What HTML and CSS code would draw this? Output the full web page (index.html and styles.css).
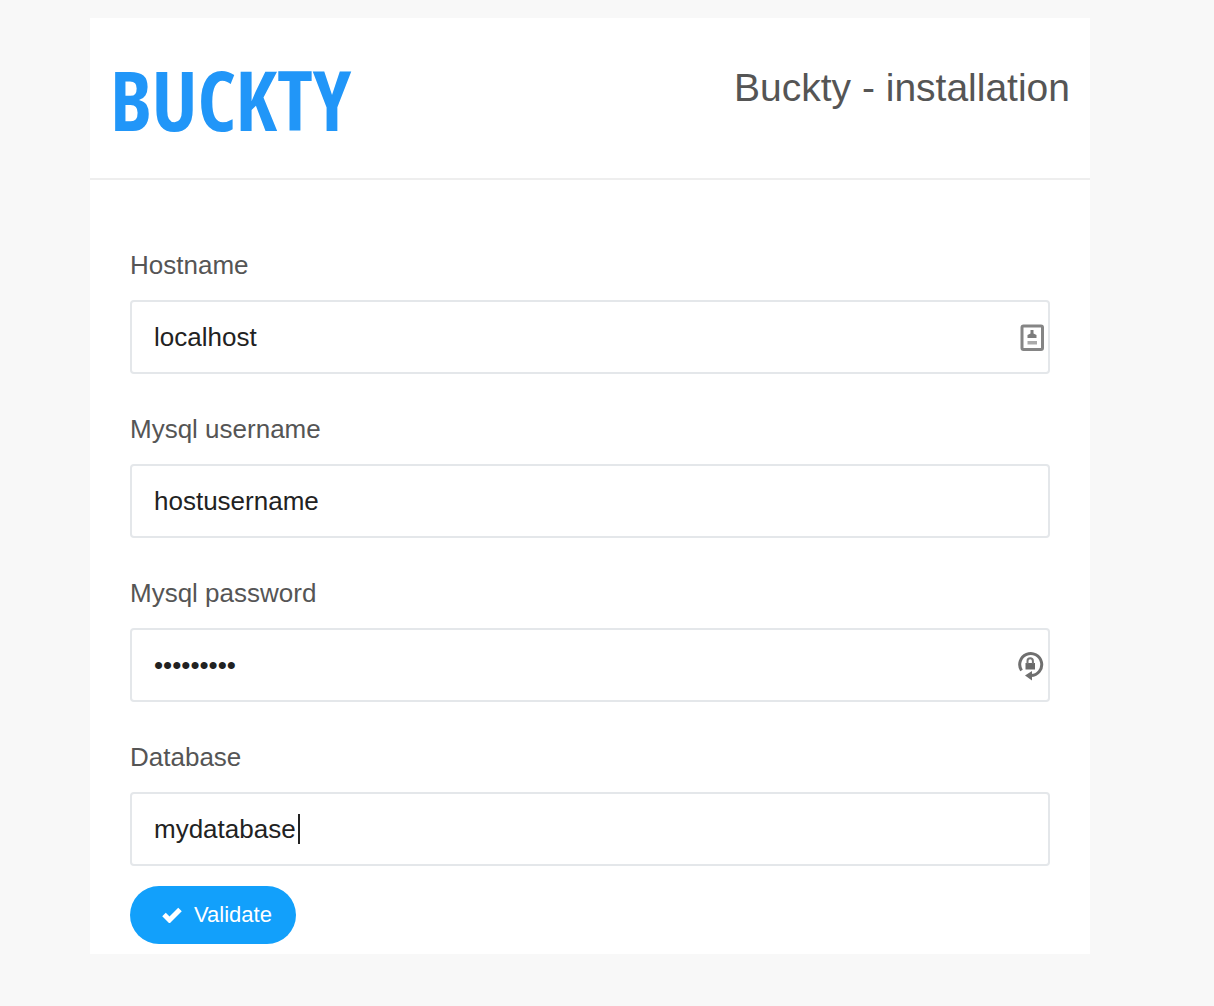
FILE: index.html
```html
<!DOCTYPE html>
<html lang="en">
<head>
<meta charset="utf-8">
<meta name="viewport" content="width=device-width, initial-scale=1">
<title>Buckty - installation</title>
<link rel="stylesheet" href="styles.css">
</head>
<body>
<main class="card">
  <header class="card-header">
    <div class="logo">BUCKTY</div>
    <h1 class="title">Buckty - installation</h1>
  </header>
  <form class="form">
    <div class="field">
      <label for="hostname">Hostname</label>
      <div class="control">
        <input id="hostname" type="text" value="localhost">
        <svg class="field-icon" viewBox="0 0 28 32" aria-hidden="true">
          <rect x="4" y="5" width="20.500" height="23.500" rx="1.500" fill="none" stroke="#858585" stroke-width="3"/>
          <path d="M12.500 9h3v3.500l3 1.500v3h-9v-3l3-1.500z" fill="#7c7c7c"/>
          <path d="M9.500 20h9.500v3.500H9.500z" fill="#aaa"/>
        </svg>
      </div>
    </div>
    <div class="field">
      <label for="username">Mysql username</label>
      <div class="control"><input id="username" type="text" value="hostusername"></div>
    </div>
    <div class="field">
      <label for="password">Mysql password</label>
      <div class="control">
        <input id="password" type="password" value="password1">
        <svg class="field-icon" viewBox="0 0 28 32" aria-hidden="true">
          <path d="M3.500 21.500A11 11 0 1 1 13 26.500" fill="none" stroke="#6f6f6f" stroke-width="3"/>
          <path d="M14 22v9.500L7 26.500z" fill="#6f6f6f"/>
          <path d="M7.500 14h9.500v6.500H7.500z" fill="#6a6a6a"/>
          <path d="M9.500 15v-3a2.700 2.700 0 0 1 5.400 0v3" fill="none" stroke="#777" stroke-width="2"/>
        </svg>
      </div>
    </div>
    <div class="field">
      <label for="database">Database</label>
      <div class="control">
        <input id="database" type="text" value="mydatabase">
        <span class="caret" aria-hidden="true"></span>
      </div>
    </div>
    <button class="button" type="submit">
      <svg class="check" viewBox="0 0 20 16" aria-hidden="true"><path d="M2 7.500l5.500 5.500L18 2.500" fill="none" stroke="#fff" stroke-width="5"/></svg>
      Validate
    </button>
  </form>
</main>
</body>
</html>
```
FILE: styles.css
```css
* { box-sizing: border-box; }

body {
  margin: 0;
  padding: 18px 124px 52px 90px;
  background: #f8f8f8;
  color: #555;
  font-family: "Liberation Sans", Arial, sans-serif;
  font-size: 26px;
  line-height: 30px;
}

.card { background: #fff; }

.card-header {
  display: flex;
  justify-content: space-between;
  align-items: flex-start;
  padding: 40px 20px 38px;
  border-bottom: 2px solid #eee;
}

.logo {
  color: #2196f8;
  font-family: "Open Sans Condensed", "Roboto Condensed", "Liberation Sans Narrow", sans-serif;
  font-size: 82px;
  font-weight: 700;
  line-height: 82px;
}

.title {
  margin: 0;
  font-size: 39px;
  font-weight: 400;
  line-height: 60px;
}

.form {
  display: flex;
  flex-direction: column;
  align-items: flex-start;
  gap: 40px;
  padding: 70px 40px 10px;
}

.field {
  display: flex;
  flex-direction: column;
  gap: 20px;
  width: 100%;
}

.control { position: relative; }

.control input {
  display: block;
  width: 100%;
  height: 74px;
  padding: 0 22px;
  border: 2px solid #e4e7ea;
  border-radius: 4px;
  outline: none;
  background: #fff;
  color: #222;
  font: inherit;
}

.field-icon {
  position: absolute;
  top: 21px;
  right: 4px;
  width: 28px;
  height: 32px;
}

.caret {
  position: absolute;
  top: 22px;
  left: 168px;
  width: 2px;
  height: 30px;
  background: #222;
}

.button {
  display: flex;
  align-items: center;
  gap: 12px;
  height: 58px;
  margin-top: -20px;
  padding: 0 24px 0 32px;
  border: 0;
  border-radius: 29px;
  background: #12a0fb;
  color: #fff;
  font: inherit;
  font-size: 22px;
}

.check { width: 20px; height: 16px; }
```
